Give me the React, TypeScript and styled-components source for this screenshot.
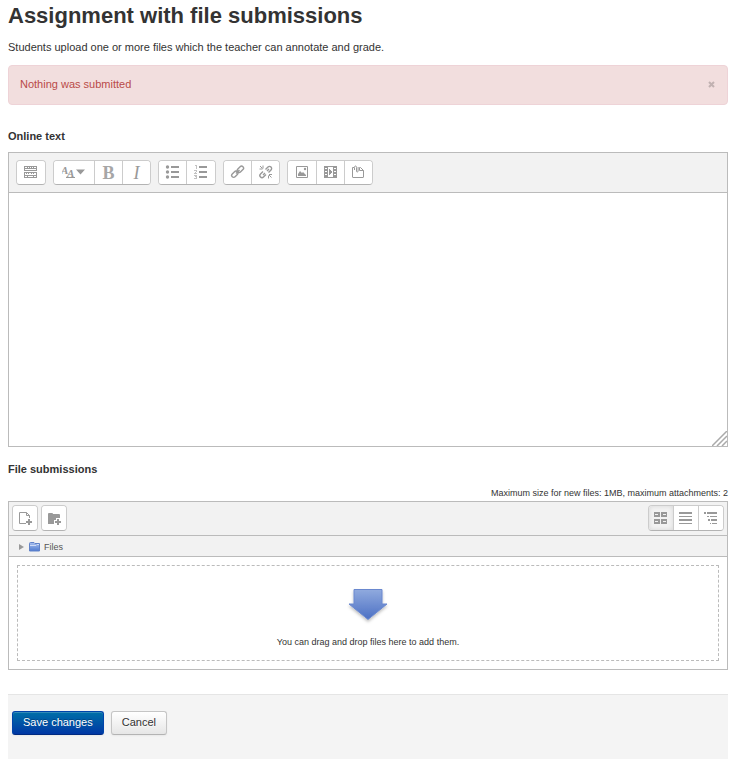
import React from "react";
import styled, { createGlobalStyle } from "styled-components";

const GlobalStyle = createGlobalStyle`
  *, *::before, *::after { box-sizing: border-box; }
  body {
    margin: 0;
    background: #fff;
    color: #333;
    font: 11px/20px "Liberation Sans", Arial, sans-serif;
  }
  button { font-family: inherit; cursor: pointer; }
`;

const Page = styled.main`
  padding: 0 8px;
`;

const Title = styled.h1`
  margin: 0;
  font-size: 22px;
  line-height: 31px;
  font-weight: bold;
`;

const Intro = styled.p`
  margin: 6px 0 8px;
`;

const Alert = styled.div`
  display: flex;
  align-items: center;
  justify-content: space-between;
  height: 40px;
  padding: 0 11px 2px;
  color: #b94a48;
  background: #f2dede;
  border: 1px solid #eed3d7;
  border-radius: 4px;
`;

const Dismiss = styled.button`
  padding: 0;
  border: 0;
  width: 9px;
  height: 20px;
  display: grid;
  place-items: center;
  background: none;
  color: #c1b1b1;
`;

const FieldLabel = styled.label`
  display: block;
  font-weight: bold;
`;

const EditorField = styled.section`
  margin-top: 21px;
`;

const Editor = styled.div`
  margin-top: 6px;
  border: 1px solid #bbb;
`;

const EditorToolbar = styled.div`
  display: flex;
  flex-wrap: wrap;
  gap: 7px;
  padding: 7px;
  background: #f2f2f2;
  border-bottom: 1px solid #bbb;
`;

const ButtonGroup = styled.div<{ $size?: "small" | "large" }>`
  display: flex;
  height: ${(p) => (p.$size === "large" ? 26 : 25)}px;
  background: #fff;
  border: 1px solid #ccc;
  border-bottom-color: #b3b3b3;
  border-radius: 4px;
  overflow: hidden;
`;

const ToolButton = styled.button<{ $width?: number }>`
  display: flex;
  align-items: center;
  justify-content: center;
  box-sizing: content-box;
  width: ${(p) => p.$width ?? 27}px;
  padding: 0;
  border: 0;
  background: #fff;
  color: #999;

  & + & { border-left: 1px solid #ccc; }
  &[aria-pressed="true"] {
    background: #f3f3f3;
    box-shadow: inset 0 0 5px rgba(0, 0, 0, 0.12);
  }
`;

const Glyph = styled.span<{ $italic?: boolean }>`
  font-family: "Liberation Serif", serif;
  font-size: 18px;
  line-height: 20px;
  font-style: ${(p) => (p.$italic ? "italic" : "normal")};
  font-weight: ${(p) => (p.$italic ? "normal" : "bold")};
  color: ${(p) => (p.$italic ? "#999" : "#a6a6a6")};
`;

const TextArea = styled.textarea`
  display: block;
  width: 100%;
  height: 253px;
  padding: 4px;
  border: 0;
  outline: 0;
  resize: none;
  background: #fff;
  font: inherit;
`;

const TextAreaWrap = styled.div`
  position: relative;
`;

const ResizeGrip = styled.svg`
  position: absolute;
  right: 0;
  bottom: 0;
`;

const FileField = styled.section`
  margin-top: 12px;
`;

const Limits = styled.div`
  margin-top: 8px;
  font-size: 9px;
  line-height: 12px;
  text-align: right;
`;

const FileManager = styled.div`
  margin-top: 2px;
  border: 1px solid #bbb;
`;

const FileToolbar = styled.div`
  display: flex;
  gap: 3px;
  padding: 3px;
  height: 34px;
  background: #f2f2f2;
  border-bottom: 1px solid #bbb;
`;

const Spacer = styled.div`
  flex: 1;
`;

const PathBar = styled.nav`
  display: flex;
  align-items: center;
  height: 21px;
  padding: 2px 10px 0;
  background: #f2f2f2;
  border-bottom: 1px solid #bbb;
  font-size: 9px;
`;

const PathLink = styled.a`
  display: flex;
  align-items: center;
  gap: 4px;
  margin-left: 5px;
  color: #555;
  text-decoration: none;
`;

const DropZone = styled.div`
  display: flex;
  flex-direction: column;
  align-items: center;
  height: 96px;
  margin: 8px;
  padding-top: 20px;
  border: 1px dashed #bbb;
  font-size: 9px;
  line-height: 12px;
`;

const DropText = styled.span`
  margin-top: 8px;
`;

const Actions = styled.footer`
  display: flex;
  gap: 7px;
  margin-top: 24px;
  padding: 16px 4px 24px;
  background: #f4f4f4;
  border-top: 1px solid #e5e5e5;
`;

const ActionButton = styled.button<{ $primary?: boolean }>`
  height: 24px;
  padding: 0 10px 2px;
  border: 1px solid ${(p) => (p.$primary ? "#0044aa" : "#c5c5c5")};
  border-bottom-color: ${(p) => (p.$primary ? "#002a80" : "#b3b3b3")};
  border-radius: 3px;
  font-size: 11px;
  line-height: 20px;
  color: ${(p) => (p.$primary ? "#fff" : "#333")};
  background: ${(p) =>
    p.$primary ? "linear-gradient(#0070a8, #0037a4)" : "linear-gradient(#fff, #e6e6e6)"};
  text-shadow: ${(p) => (p.$primary ? "0 -1px 0 rgba(0,0,0,.25)" : "0 1px 1px rgba(255,255,255,.75)")};
  box-shadow: inset 0 1px 0 rgba(255, 255, 255, 0.2), 0 1px 2px rgba(0, 0, 0, 0.05);
`;

type IconProps = { children: React.ReactNode; w?: number; x?: number; y?: number; crisp?: boolean };

function Icon({ children, w = 16, x = 0, y = 1, crisp }: IconProps) {
  return (
    <svg
      width={w}
      height="16"
      viewBox={`${x} ${y} ${w} 16`}
      fill="currentColor"
      shapeRendering={crisp ? "crispEdges" : undefined}
      aria-hidden="true"
    >
      {children}
    </svg>
  );
}

const ToolbarToggleIcon = () => (
  <Icon x={1} crisp>
    <path d="M2 2h13v5H2zM2 8h13v6H2z" />
    <path
      d="M3 3h2v1H3zM6 3h1v1H6zM8 3h1v1H8zM10 3h1v1h-1zM12 3h2v1h-2zM3 5h11v1H3zM3 9h1v1H3zM5 9h1v1H5zM7 9h2v1H7zM10 9h1v1h-1zM12 9h2v1h-2zM3 10h11v1H3zM3 12h2v1H3zM6 12h5v1H6zM12 12h2v1h-2z"
      fill="#fff"
    />
  </Icon>
);

const StylesIcon = () => (
  <Icon w={24} x={1}>
    <g fontFamily="Liberation Serif, serif" fontStyle="italic" fontWeight="bold">
      <text x="0" y="10" fontSize="11">A</text>
      <text x="6" y="13" fontSize="11">A</text>
    </g>
    <path d="M5 13h9v1H5zM15 5.500h9l-4.500 5z" />
  </Icon>
);

const BulletIcon = () => (
  <Icon>
    <circle cx="2.500" cy="3" r="1.700" />
    <circle cx="2.500" cy="8" r="1.700" />
    <circle cx="2.500" cy="13" r="1.700" />
    <path d="M6 2h8v2H6zM6 7h8v2H6zM6 12h8v2H6z" />
  </Icon>
);

const NumberIcon = () => (
  <Icon crisp>
    <path d="M2 1h2v4H3V2H2zM1 6h3v2H3v1h1v1H1V9h1V8h1V7H1zM1 11h3v4H1v-1h2v-1H2v-1H1z" opacity=".6" />
    <path d="M6 2h8v2H6zM6 7h8v2H6zM6 12h8v2H6z" />
  </Icon>
);

const LinkIcon = () => (
  <Icon>
    <g fill="none" stroke="currentColor" strokeWidth="1.400">
      <rect x="1.200" y="8.200" width="7.200" height="4" rx="2" transform="rotate(-45 4.800 10.200)" />
      <rect x="6.800" y="3.300" width="7.200" height="4" rx="2" transform="rotate(-45 10.400 5.300)" />
      <path d="M6 9.500 9.500 6" />
    </g>
  </Icon>
);

const UnlinkIcon = () => (
  <Icon>
    <g fill="none" stroke="currentColor" strokeWidth="1.400">
      <path d="M5 7.500 2.500 10a2 2 0 0 0 3 3L8 10.500M7.500 5.500 10 3a2 2 0 0 1 3 3l-2.500 2.500M9 7l2-2M5 11l2-2" />
      <path d="M5 1.500v3M1.500 5h3M2 2l2.500 2.500M10.500 11.500v3M11 10.500h3M11 11l2.500 2.500" strokeWidth="1" />
    </g>
  </Icon>
);

const ImageIcon = () => (
  <Icon>
    <path d="M2.500 2.500h11v11h-11z" fill="none" stroke="currentColor" />
    <path d="M4 12V10l2-3 2 2 1-1 3 3v1z" />
    <circle cx="11" cy="5" r="1.200" />
  </Icon>
);

const MediaIcon = () => (
  <Icon x={1} crisp>
    <path d="M2 2h13v12H2z" />
    <path d="M6 3h5v10H6zM3 4h2v1H3zM3 7h2v1H3zM3 10h2v1H3zM12 4h2v1h-2zM12 7h2v1h-2zM12 10h2v1h-2z" fill="#fff" />
    <path d="M7 5l3 3-3 3z" />
  </Icon>
);

const ManageFilesIcon = () => (
  <Icon x={1}>
    <g fill="none" stroke="currentColor">
      <path d="M4 3.500H2.500v9.500q0 .5.500.5h10q.5 0 .5-.5V6.500l-3-3h-1" />
      <path d="M9.500 3.500v3h4M4.500 6V3.500q0-1.500 1-1.500t1 1.500V7q0 1 .8 1t.8-1V3" />
    </g>
  </Icon>
);

const AddFileIcon = () => (
  <Icon y={0}>
    <path d="M9 13.500H2.500v-11h7l3 3V8M9.500 2.500v3h3" fill="none" stroke="currentColor" />
    <path d="M11 9h2v2h2v2h-2v2h-2v-2H9v-2h2z" />
  </Icon>
);

const AddFolderIcon = () => (
  <Icon y={0}>
    <path d="M2 4q0-1 1-1h3q1 0 1 1h6q1 0 1 1v3h-4v2H8v4H2z" />
    <path d="M11 9h2v2h2v2h-2v2h-2v-2H9v-2h2z" />
  </Icon>
);

const GridIcon = () => (
  <Icon x={1} crisp>
    <path
      fillRule="evenodd"
      d="M2 3h6v5H2zM3 5v1h3V5zM9 3h6v5H9zM11 5v1h3V5zM2 10h6v5H2zM3 12v1h3v-1zM9 10h6v5H9zM11 12v1h3v-1z"
    />
  </Icon>
);

const ListIcon = () => (
  <Icon x={1} crisp>
    <path d="M2 3h13v2H2zM2 7h13v1H2zM2 10h13v2H2zM2 14h13v1H2z" />
  </Icon>
);

const TreeIcon = () => (
  <Icon x={1} crisp>
    <path d="M2 3h2v2H2zM5 3h10v2H5zM5 7h2v1H5zM8 7h7v1H8zM6 10h2v2H6zM9 10h6v2H9zM8 14h1v1H8zM10 14h5v1h-5z" />
  </Icon>
);

const FolderIcon = () => (
  <svg width="11" height="10" viewBox="0 0 11 10" aria-hidden="true">
    <defs>
      <linearGradient id="folder" x2="0" y2="1">
        <stop offset="0" stopColor="#a9c0ef" />
        <stop offset="1" stopColor="#4f7bd0" />
      </linearGradient>
    </defs>
    <path d="M.5 1.500q0-1 1-1H5l1 1h4.500V9H.5z" fill="url(#folder)" stroke="#6183c9" />
    <path d="M1 3.500h6l1-1h2" fill="none" stroke="#cddbf7" />
  </svg>
);

const DropArrow = () => (
  <svg width="42" height="42" viewBox="0 0 42 42" aria-hidden="true">
    <defs>
      <linearGradient id="arrow" x2="0" y2="1">
        <stop offset="0" stopColor="#90aade" />
        <stop offset="1" stopColor="#4c70c4" />
      </linearGradient>
      <filter id="shade" x="-20%" y="-20%" width="140%" height="150%">
        <feDropShadow dx="0" dy="2" stdDeviation="1.500" floodColor="#000" floodOpacity=".25" />
      </filter>
    </defs>
    <path d="M7 3.500h28V18h5L21 33.500 2 18h5z" fill="url(#arrow)" stroke="#6a88cf" filter="url(#shade)" />
  </svg>
);

function Tool({ label, width, pressed, children }: {
  label: string;
  width?: number;
  pressed?: boolean;
  children: React.ReactNode;
}) {
  return (
    <ToolButton type="button" aria-label={label} title={label} $width={width} aria-pressed={pressed}>
      {children}
    </ToolButton>
  );
}

export default function App() {
  return (
    <>
      <GlobalStyle />
      <Page>
        <Title>Assignment with file submissions</Title>
        <Intro>Students upload one or more files which the teacher can annotate and grade.</Intro>
        <Alert role="alert">
          <span>Nothing was submitted</span>
          <Dismiss type="button" aria-label="Dismiss">
            <svg width="7" height="8" viewBox="0 0 7 8" aria-hidden="true">
              <path d="M1 2l5 5M6 2 1 7" stroke="currentColor" strokeWidth="2" />
            </svg>
          </Dismiss>
        </Alert>

        <EditorField>
          <FieldLabel htmlFor="online-text">Online text</FieldLabel>
          <Editor>
            <EditorToolbar role="toolbar" aria-label="Editor">
              <ButtonGroup>
                <Tool label="Show more buttons" width={28}><ToolbarToggleIcon /></Tool>
              </ButtonGroup>
              <ButtonGroup>
                <Tool label="Paragraph styles" width={40}><StylesIcon /></Tool>
                <Tool label="Bold"><Glyph>B</Glyph></Tool>
                <Tool label="Italic"><Glyph $italic>I</Glyph></Tool>
              </ButtonGroup>
              <ButtonGroup>
                <Tool label="Unordered list"><BulletIcon /></Tool>
                <Tool label="Ordered list" width={28}><NumberIcon /></Tool>
              </ButtonGroup>
              <ButtonGroup>
                <Tool label="Link"><LinkIcon /></Tool>
                <Tool label="Unlink"><UnlinkIcon /></Tool>
              </ButtonGroup>
              <ButtonGroup>
                <Tool label="Image" width={28}><ImageIcon /></Tool>
                <Tool label="Media"><MediaIcon /></Tool>
                <Tool label="Manage files"><ManageFilesIcon /></Tool>
              </ButtonGroup>
            </EditorToolbar>
            <TextAreaWrap>
              <TextArea id="online-text" />
              <ResizeGrip width="15" height="15" viewBox="0 0 15 15" aria-hidden="true">
                <path d="M0 15 15 0M5 15 15 5M10 15l5-5" stroke="#aaa" strokeWidth="1.500" />
              </ResizeGrip>
            </TextAreaWrap>
          </Editor>
        </EditorField>

        <FileField aria-labelledby="files-label">
          <FieldLabel as="div" id="files-label">File submissions</FieldLabel>
          <Limits>Maximum size for new files: 1MB, maximum attachments: 2</Limits>
          <FileManager>
            <FileToolbar>
              <ButtonGroup $size="large">
                <Tool label="Add file" width={24}><AddFileIcon /></Tool>
              </ButtonGroup>
              <ButtonGroup $size="large">
                <Tool label="Create folder" width={24}><AddFolderIcon /></Tool>
              </ButtonGroup>
              <Spacer />
              <ButtonGroup $size="large">
                <Tool label="Icons view" width={24} pressed><GridIcon /></Tool>
                <Tool label="List view" width={24}><ListIcon /></Tool>
                <Tool label="Tree view" width={24}><TreeIcon /></Tool>
              </ButtonGroup>
            </FileToolbar>
            <PathBar aria-label="Folder path">
              <svg width="5" height="6" viewBox="0 0 5 6" aria-hidden="true">
                <path d="M0 0l5 3-5 3z" fill="#999" />
              </svg>
              <PathLink href="#files"><FolderIcon />Files</PathLink>
            </PathBar>
            <DropZone>
              <DropArrow />
              <DropText>You can drag and drop files here to add them.</DropText>
            </DropZone>
          </FileManager>
        </FileField>

        <Actions>
          <ActionButton type="submit" $primary>Save changes</ActionButton>
          <ActionButton type="button">Cancel</ActionButton>
        </Actions>
      </Page>
    </>
  );
}
